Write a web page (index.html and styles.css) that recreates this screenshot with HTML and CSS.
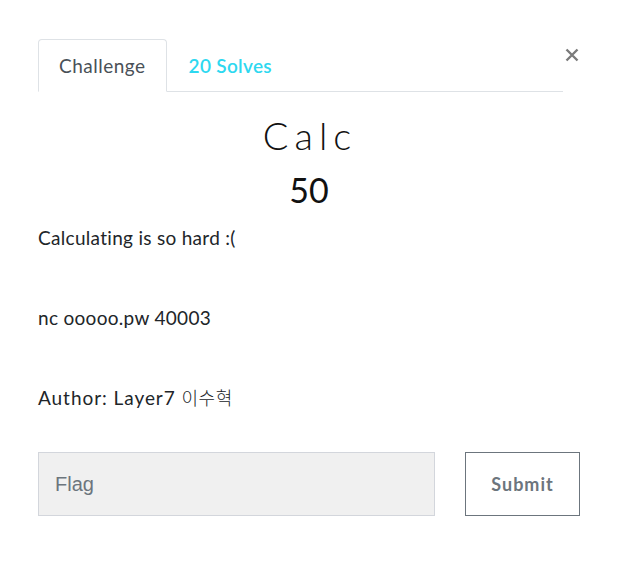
FILE: index.html
```html
<!DOCTYPE html>
<html lang="en">
<head>
<meta charset="utf-8">
<title>Calc</title>
<link rel="stylesheet" href="styles.css">
</head>
<body>
<div class="modal">
  <div class="header">
    <ul class="tabs">
      <li class="tab active">Challenge</li>
      <li class="tab link">20 Solves</li>
    </ul>
    <button class="close" aria-label="Close">
      <svg width="14" height="14" viewBox="0 0 14 14" aria-hidden="true">
        <path d="M1.5 1.5 L12.5 12.5 M12.5 1.5 L1.5 12.5" stroke="#7b7b7b" stroke-width="2.4" fill="none"/>
      </svg>
    </button>
  </div>
  <h1 class="name">Calc</h1>
  <h2 class="value">50</h2>
  <div class="desc">
    <p>Calculating is so hard :(</p>
    <p>nc ooooo.pw 40003</p>
    <p class="author">Author: Layer7 <span class="ko">이수혁</span></p>
  </div>
  <form class="submit-row">
    <input class="flag" type="text" placeholder="Flag">
    <button class="submit" type="button">Submit</button>
  </form>
</div>
</body>
</html>
```
FILE: styles.css
```css
html, body {
  margin: 0;
  padding: 0;
  background: #ffffff;
}
body {
  font-family: "Lato", "Noto Sans CJK KR", sans-serif;
  font-variant-ligatures: none;
  color: #212529;
}
.modal {
  width: 542px;
  padding: 39px 0 0 38px;
}
.header {
  display: flex;
  align-items: flex-start;
}
.tabs {
  flex: 1;
  display: flex;
  list-style: none;
  margin: 0;
  padding: 0;
  border-bottom: 1px solid #dee2e6;
}
.tab {
  font-size: 19px;
  line-height: 27px;
  padding: 12px 20px 12px 20px;
  margin-bottom: -1px;
  border: 1px solid transparent;
  border-radius: 4px 4px 0 0;
}
.tab.active {
  color: #495057;
  letter-spacing: 0.5px;
  border-color: #dee2e6 #dee2e6 #ffffff;
  background: #fff;
}
.tab.link {
  color: #2dd8f0;
  font-weight: 600;
  letter-spacing: 0.3px;
  padding-left: 21px;
}
.close {
  width: 17px;
  padding: 0;
  margin-top: 9px;
  border: 0;
  background: none;
  display: flex;
  justify-content: center;
}
.name {
  margin: 20px 0 0;
  text-align: center;
  font-family: "Lato", sans-serif;
  font-weight: 300;
  font-size: 38px;
  letter-spacing: 6px;
  text-indent: 2px;
  line-height: 46px;
  color: #111;
}
.value {
  margin: 12px 0 0;
  text-align: center;
  font-weight: 400;
  font-size: 34px;
  line-height: 40px;
  color: #111;
}
.desc {
  margin-top: 14px;
  font-size: 19px;
  letter-spacing: 0.3px;
  line-height: 27px;
}
.desc p {
  margin: 0 0 53px;
}
.desc p:last-child {
  margin-bottom: 0;
}
.desc .author {
  letter-spacing: 0.95px;
}
.ko {
  font-family: "Noto Sans CJK KR", sans-serif;
  font-weight: 300;
  font-size: 18px;
  letter-spacing: 0.5px;
}
.submit-row {
  display: flex;
  gap: 30px;
  margin-top: 41px;
}
.flag {
  width: 397px;
  height: 64px;
  box-sizing: border-box;
  background: #f0f0f0;
  border: 1px solid #d3d6dc;
  padding: 0 16px;
  font-family: "Liberation Sans", sans-serif;
  font-size: 20px;
  color: #495057;
}
.flag::placeholder {
  color: #6c757d;
}
.submit {
  width: 115px;
  height: 64px;
  box-sizing: border-box;
  background: #fff;
  border: 1px solid #6c757d;
  font-family: "Lato", sans-serif;
  font-weight: 700;
  font-size: 18px;
  letter-spacing: 1px;
  color: #6c757d;
}
```
